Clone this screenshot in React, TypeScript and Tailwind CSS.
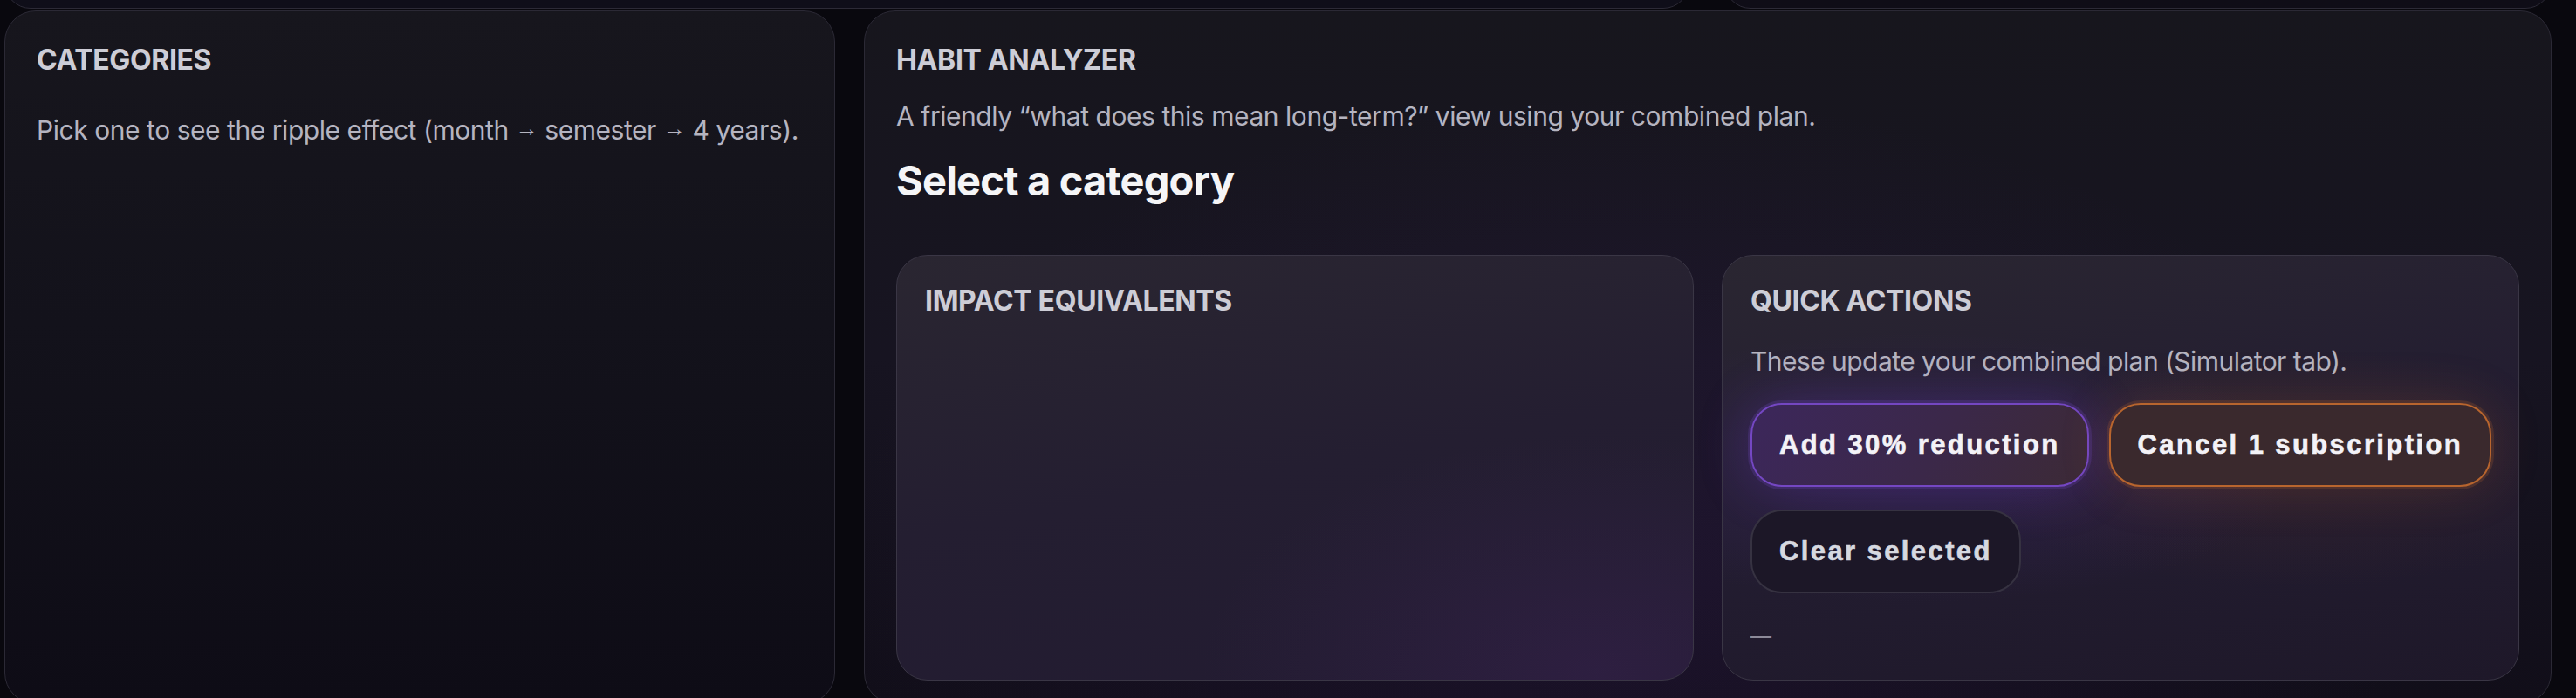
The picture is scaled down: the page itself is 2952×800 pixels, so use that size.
import React from "react";

const btnText =
  "font-['Liberation_Sans',Arial,sans-serif] font-bold text-[31px] leading-[36px] tracking-[2.4px] [-webkit-text-stroke:0.6px_currentColor] whitespace-nowrap shrink-0";

const title = "text-[32px] font-bold leading-[40px] tracking-[-0.35px] text-[#cdcdd6]";
const body = "text-[30px] leading-[42px] tracking-[-0.45px] text-[#b5b4c0]";

function Arrow() {
  return <span className="font-['Liberation_Sans',sans-serif] text-[26px] align-[4px]">→</span>;
}

export default function App() {
  return (
    <div className="min-h-screen w-full bg-[#09080e] pl-[5px] pr-[28px] font-['Inter',sans-serif] overflow-hidden">
      {/* previous row (only its bottom edge is visible) */}
      <div className="flex h-[10px] gap-[40px] overflow-hidden">
        <div className="-mt-[50px] h-[60px] w-[1931px] shrink-0 rounded-[36px] border border-[#2c2a36] bg-[#0f0e19]" />
        <div className="-mt-[50px] h-[60px] flex-1 rounded-[36px] border border-[#2c2a36] bg-[#0f0d17]" />
      </div>

      <div className="mt-[2px] flex gap-[33px]">
        {/* Categories */}
        <section className="w-[952px] shrink-0 rounded-[36px] border border-[#2b2935] bg-[linear-gradient(180deg,#17161d_0%,#13121b_45%,#0e0c16_100%)] px-[36px] pt-[36px] pb-[26px]">
          <h2 className={title}>CATEGORIES</h2>
          <p className={`mt-[37px] whitespace-nowrap ${body}`}>
            Pick one to see the ripple effect (month <Arrow /> semester <Arrow /> 4 years).
          </p>
        </section>

        {/* Habit analyzer */}
        <section className="flex-1 rounded-[36px] border border-[#2b2935] bg-[radial-gradient(ellipse_at_45%_80%,rgba(70,35,110,0.22),transparent_60%),linear-gradient(180deg,#17161d_0%,#171421_50%,#110e19_100%)] px-[36px] pt-[36px] pb-[26px]">
          <h2 className={title}>HABIT ANALYZER</h2>
          <p className={`mt-[23px] ${body}`}>
            A friendly “what does this mean long-term?” view using your combined plan.
          </p>
          <h1 className="mt-[25px] text-[47px] font-bold leading-[55px] tracking-[-0.8px] text-[#f5f5f7]">
            Select a category
          </h1>

          <div className="mt-[58px] grid grid-cols-2 gap-[32px]">
            {/* Impact equivalents */}
            <div className="rounded-[36px] border border-[#3a3645] bg-[radial-gradient(ellipse_at_88%_98%,rgba(75,40,105,0.28),transparent_40%),linear-gradient(170deg,#2a2631_0%,#241e31_50%,#221b31_100%)] p-[32px]">
              <h3 className={title}>IMPACT EQUIVALENTS</h3>
            </div>

            {/* Quick actions */}
            <div className="rounded-[36px] border border-[#3a3645] bg-[radial-gradient(ellipse_at_25%_50%,rgba(80,45,140,0.25),transparent_45%),radial-gradient(ellipse_at_72%_50%,rgba(110,55,40,0.18),transparent_40%),linear-gradient(170deg,#2a2631_0%,#231d31_50%,#1e1829_100%)] p-[32px]">
              <h3 className={title}>QUICK ACTIONS</h3>
              <p className={`mt-[28px] tracking-[-0.55px] ${body}`}>
                These update your combined plan (Simulator tab).
              </p>
              <div className="mt-[27px] flex flex-col items-start gap-[26px]">
                <div className="flex gap-[23px]">
                  <button
                    className={`h-[96px] rounded-[36px] border-2 border-[#7447c2] bg-[linear-gradient(120deg,#3c275b_0%,#3b2849_55%,#3c2a36_100%)] px-[31px] text-[#f3f2f7] shadow-[0_0_0_3px_rgba(116,71,194,0.22),0_0_60px_rgba(110,60,200,0.3)] ${btnText}`}
                  >
                    Add 30% reduction
                  </button>
                  <button
                    className={`h-[96px] rounded-[36px] border-2 border-[#b8652e] bg-[#3a292d] px-[31px] text-[#f3f2f7] shadow-[0_0_0_3px_rgba(184,101,46,0.2),0_0_60px_rgba(200,110,50,0.18)] ${btnText}`}
                  >
                    Cancel 1 subscription
                  </button>
                </div>
                <button
                  className={`h-[96px] rounded-[36px] border-2 border-[#363241] bg-[#1c1727] px-[31px] text-[#d6d9e0] ${btnText}`}
                >
                  Clear selected
                </button>
              </div>
              <div className="mt-[31px] text-[24px] leading-[36px] text-[#8d8a99]">—</div>
            </div>
          </div>
        </section>
      </div>
    </div>
  );
}
